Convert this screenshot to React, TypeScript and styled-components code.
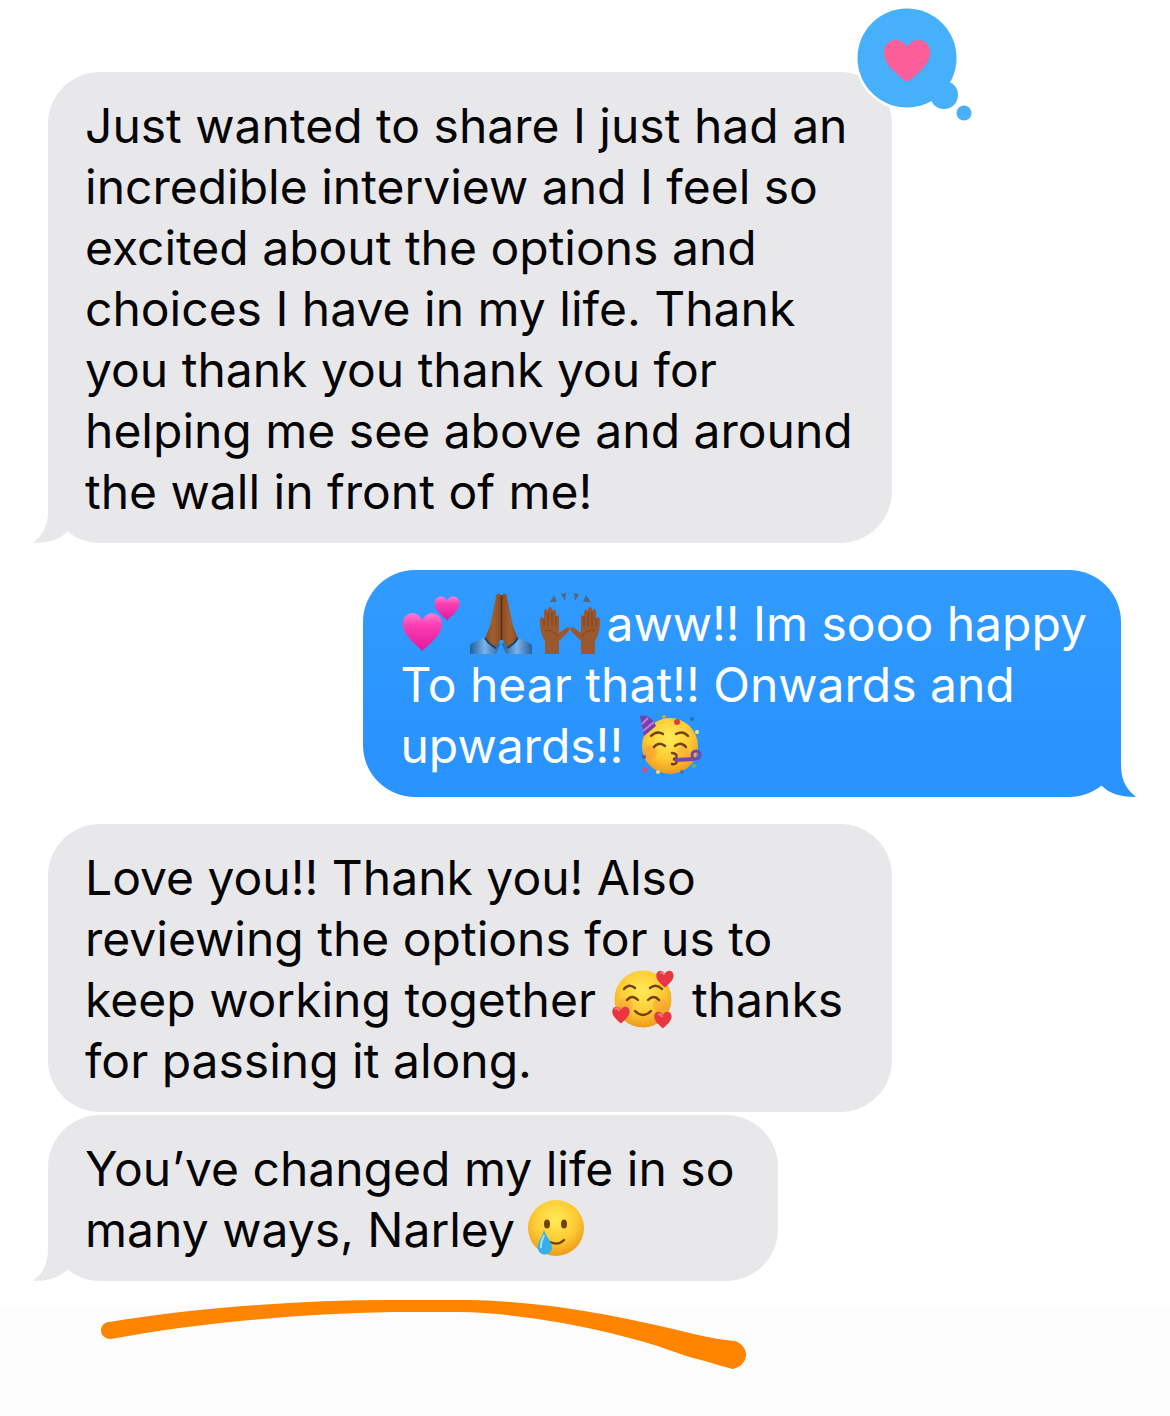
import React from "react";
import styled, { createGlobalStyle, css } from "styled-components";

const GlobalStyle = createGlobalStyle`
  * { box-sizing: border-box; }
  html { background: #fcfcfc; }
  body { margin: 0; font-family: Inter, Roboto, "Liberation Sans", sans-serif; }
`;

const Page = styled.main`
  min-height: 100vh;
  display: flex;
  flex-direction: column;
`;

const Thread = styled.section`
  display: flex;
  flex-direction: column;
  align-items: flex-start;
  padding: 72px 49px 26px 48px;
  background: #ffffff;
`;

type Side = "received" | "sent";

const Bubble = styled.article<{ $side: Side; $width: number; $gap?: number }>`
  position: relative;
  width: ${(p) => p.$width}%;
  margin-top: ${(p) => p.$gap ?? 0}px;
  padding: 23px 28px 21px 37px;
  border-radius: 52px;
  font-size: 48px;
  line-height: 61px;
  ${(p) =>
    p.$side === "sent"
      ? css`
          align-self: flex-end;
          color: #ffffff;
          background: linear-gradient(#319bff, #2994fd 75%);
        `
      : css`
          color: #050505;
          background: #e8e8eb;
        `}
`;

const Message = styled.p`
  position: relative;
  margin: 0;
`;

const Line = styled.span`
  display: block;
  white-space: pre-wrap;
`;

const TailShape = styled.svg<{ $side: Side }>`
  position: absolute;
  bottom: 0;
  width: 60px;
  height: 60px;
  ${(p) =>
    p.$side === "sent"
      ? css`
          right: -16px;
          transform: scaleX(-1);
          fill: #2994fd;
        `
      : css`
          left: -16px;
          fill: #e8e8eb;
        `}
`;

const Reaction = styled.svg`
  position: absolute;
  top: -66px;
  right: -83px;
  width: 120px;
  height: 120px;
`;

const Emoji = styled.svg<{ $before?: number; $after?: number }>`
  width: 62px;
  height: 62px;
  margin: -4px ${(p) => p.$after ?? 0}px -4px ${(p) => p.$before ?? 0}px;
  vertical-align: -9px;
  overflow: visible;
`;

const Underline = styled.footer`
  flex: 1;
  background: #fcfcfc;
`;

const Stroke = styled.svg`
  display: block;
  width: 660px;
  max-width: 100%;
  height: 80px;
  margin: -11px 0 0 96px;
`;

const Tail = ({ side }: { side: Side }) => (
  <TailShape $side={side} viewBox="0 0 60 60" aria-hidden="true">
    <path d="M16 8V27C16 42 12 51 1 60C15 60 28 57 36 48L40 40L30 8Z" />
  </TailShape>
);

const HeartReaction = () => (
  <Reaction viewBox="0 0 120 120" role="img" aria-label="Loved">
    <circle cx="52" cy="52" r="52" fill="#fff" />
    <g fill="#46b0fb">
      <circle cx="52" cy="52" r="49.500" />
      <circle cx="89" cy="89" r="14" />
      <circle cx="109" cy="107" r="7.500" />
    </g>
    <path
      d="M52 75.500C50 75.500 45 71 41 67C34 61 29 55 29 46C29 34 45 29 52 41C59 29 75 34 75 46C75 55 70 61 63 67C59 71 54 75.500 52 75.500Z"
      fill="#fb5f99"
    />
  </Reaction>
);

const HEART = "M32 60C25 52 3 38 4 20C5 3 26 1 32 16C38 1 59 3 60 20C61 38 39 52 32 60Z";

const TwoHearts = () => (
  <Emoji viewBox="0 0 62 62" $after={7} role="img" aria-label="two hearts">
    <defs>
      <linearGradient id="pink" x1="0" y1="0" x2="0" y2="1">
        <stop offset="0" stopColor="#ff7fd2" />
        <stop offset=".3" stopColor="#fb3fb4" />
        <stop offset="1" stopColor="#e3189b" />
      </linearGradient>
    </defs>
    <path d={HEART} fill="url(#pink)" transform="translate(0 17) scale(.7)" />
    <path d={HEART} fill="url(#pink)" transform="translate(33 2) scale(.44)" />
  </Emoji>
);

const Pray = () => (
  <Emoji viewBox="0 0 62 62" $before={1} $after={7} role="img" aria-label="folded hands">
    <defs>
      <linearGradient id="sleeve">
        <stop offset="0" stopColor="#1d5f9f" />
        <stop offset=".5" stopColor="#79b3ea" />
        <stop offset="1" stopColor="#275f9c" />
      </linearGradient>
      <linearGradient id="skin">
        <stop offset="0" stopColor="#8b4c25" />
        <stop offset=".5" stopColor="#a0602f" />
        <stop offset="1" stopColor="#8a4a25" />
      </linearGradient>
    </defs>
    <path d="M0 62V53C6 48 14 47 19 43L30 52L26 62Z" fill="url(#sleeve)" />
    <path d="M62 62V53C56 48 48 47 43 43L32 52L36 62Z" fill="url(#sleeve)" />
    <path d="M31 4C29 0 26 1 26 5L20 34L15 46L25 56L31 47Z" fill="url(#skin)" />
    <path d="M32 4C34 0 37 1 37 5L43 34L48 46L38 56L32 47Z" fill="url(#skin)" />
    <path d="M31.500 3V48" fill="none" stroke="#5b2f18" strokeWidth="1.500" />
    <path d="M15 46C18 51 22 54 26 56M48 46C45 51 41 54 37 56" fill="none" stroke="#174774" strokeWidth="2" />
  </Emoji>
);

const RaisedHand = () => (
  <>
    <path
      d="M6 62V49C2 43 1 35 1 28C1 24 4 24 5 28L5 20C5 16 8 16 9 20V18C9 14 13 14 13 18V20C14 16 17 17 17 21V25C18 22 21 23 20 27V41L27 36C30 34 32 37 29 40L20 49V62Z"
      fill="#9a582c"
    />
    <path d="M5 26V34M9 20V34M13 20V34M17 24V34M6 39C11 37 15 40 19 44" fill="none" stroke="#7b4220" strokeWidth="1" />
  </>
);

const RaisedHands = () => (
  <Emoji viewBox="0 0 62 62" $after={5} role="img" aria-label="raising hands">
    <RaisedHand />
    <g transform="translate(62 0) scale(-1 1)">
      <RaisedHand />
    </g>
    <path d="M15 3L18 10L11 10ZM22 2L27 1L26 9ZM35 1L40 2L36 9ZM47 3L52 10L44 10Z" fill="#53677d" />
  </Emoji>
);

const FaceFill = ({ id }: { id: string }) => (
  <defs>
    <radialGradient id={id} cx=".48" cy=".35" r=".65">
      <stop offset="0" stopColor="#ffec58" />
      <stop offset=".6" stopColor="#fdca33" />
      <stop offset="1" stopColor="#ee991f" />
    </radialGradient>
  </defs>
);

const faceLine = { fill: "none", stroke: "#71400f", strokeWidth: 2.4, strokeLinecap: "round" } as const;

const PartyFace = () => (
  <Emoji viewBox="0 0 62 62" $before={3} role="img" aria-label="partying face">
    <FaceFill id="party" />
    <circle cx="30" cy="32" r="28" fill="url(#party)" />
    <path d="M0 2C6 0 13 4 16 12L4 22Z" fill="#7542a9" />
    <path d="M2 10L8 4M3 17L14 8" stroke="#c17be0" strokeWidth="2" />
    <circle cx="10" cy="38" r="7" fill="#ff8a38" opacity=".4" />
    <circle cx="43" cy="38" r="6" fill="#ff8a38" opacity=".3" />
    <path d="M11 22Q17 16 23 20M36 20Q43 16 48 22M14 33Q19 27 25 32M35 32Q41 27 46 33" {...faceLine} />
    <path d="M32 39C39 40 37 45 33 45C39 46 37 51 32 50" {...faceLine} />
    <path d="M35 46L54 45" stroke="#7647a8" strokeWidth="4" />
    <circle cx="56" cy="41" r="4" fill="none" stroke="#7647a8" strokeWidth="3" />
    <circle cx="37" cy="8" r="3" fill="#db3f3b" />
    <circle cx="52" cy="5" r="2" fill="#3169ba" />
    <circle cx="57" cy="18" r="2" fill="#f3e37e" />
    <circle cx="4" cy="43" r="2" fill="#5c55ad" />
    <circle cx="5" cy="56" r="3" fill="#b05b99" />
    <circle cx="18" cy="58" r="2" fill="#f2d878" />
    <circle cx="42" cy="58" r="2" fill="#4472b7" />
    <circle cx="54" cy="52" r="2" fill="#76ac72" />
    <circle cx="24" cy="3" r="2" fill="#d6a640" />
  </Emoji>
);

const HeartsFace = () => (
  <Emoji viewBox="0 0 62 62" $before={3} $after={4} role="img" aria-label="smiling face with hearts">
    <FaceFill id="love" />
    <circle cx="31" cy="31" r="28.500" fill="url(#love)" />
    <circle cx="14" cy="37" r="7" fill="#ff8a38" opacity=".35" />
    <circle cx="48" cy="37" r="7" fill="#ff8a38" opacity=".35" />
    <path d="M12 21Q17 15 23 20M38 20Q44 15 50 21M15 32Q20 26 26 32M36 32Q42 26 47 32M23 43Q31 51 39 43" {...faceLine} />
    <g fill="#e93642">
      <path d={HEART} transform="translate(43 1) scale(.31)" />
      <path d={HEART} transform="translate(-1 37) scale(.31)" />
      <path d={HEART} transform="translate(41 42) scale(.31)" />
    </g>
    <path d="M48 5Q51 3 52 7M3 41Q6 39 7 43M46 47Q49 45 50 49" fill="none" stroke="#ff7e80" strokeWidth="2" />
  </Emoji>
);

const TearFace = () => (
  <Emoji viewBox="3 1 62 62" role="img" aria-label="smiling face with tear">
    <FaceFill id="tear" />
    <circle cx="31" cy="31" r="28" fill="url(#tear)" />
    <ellipse cx="22" cy="27" rx="3" ry="4.500" fill="#71400f" />
    <ellipse cx="39" cy="27" rx="3" ry="4.500" fill="#71400f" />
    <path d="M25 45Q33 49 39 43" {...faceLine} />
    <path d="M19 33C17 41 12 45 13 52C15 60 26 59 27 51C27 44 21 40 19 33Z" fill="#35aeea" />
    <path d="M19 38C17 44 15 47 16 51" fill="none" stroke="#a3e7ff" strokeWidth="2" />
  </Emoji>
);

export default function App() {
  return (
    <>
      <GlobalStyle />
      <Page>
        <Thread>
          <Bubble $side="received" $width={78.7}>
            <Tail side="received" />
            <Message>
              <Line>Just wanted to share I just had an</Line>
              <Line>incredible interview and I feel so</Line>
              <Line>excited about the options and</Line>
              <Line>choices I have in my life. Thank</Line>
              <Line>you thank you thank you for</Line>
              <Line>helping me see above and around</Line>
              <Line>the wall in front of me!</Line>
            </Message>
            <HeartReaction />
          </Bubble>
          <Bubble $side="sent" $width={70.6} $gap={27}>
            <Tail side="sent" />
            <Message>
              <Line>
                <TwoHearts />
                <Pray />
                <RaisedHands />
                aww!! Im sooo happy
              </Line>
              <Line>To hear that!! Onwards and</Line>
              <Line>
                {"upwards!! "}
                <PartyFace />
              </Line>
            </Message>
          </Bubble>
          <Bubble $side="received" $width={78.7} $gap={27}>
            <Message>
              <Line>Love you!! Thank you! Also</Line>
              <Line>reviewing the options for us to</Line>
              <Line>
                {"keep working together "}
                <HeartsFace />
                {" thanks"}
              </Line>
              <Line>for passing it along.</Line>
            </Message>
          </Bubble>
          <Bubble $side="received" $width={68} $gap={3}>
            <Tail side="received" />
            <Message>
              <Line>You’ve changed my life in so</Line>
              <Line>
                {"many ways, Narley "}
                <TearFace />
              </Line>
            </Message>
          </Bubble>
        </Thread>
        <Underline>
          <Stroke viewBox="0 0 660 80" aria-hidden="true">
            <path
              d="M13 26C100 12 200 4 296 4H372C450 5 530 21 602 39C612 41 626 44 639 45C654 50 654 69 637 73C626 70 618 68 609 65C590 61 575 54 555 48C510 34 430 17 363 16H296C200 18 100 27 15 43C2 43 2 27 13 26Z"
              fill="#ff8500"
            />
          </Stroke>
        </Underline>
      </Page>
    </>
  );
}
